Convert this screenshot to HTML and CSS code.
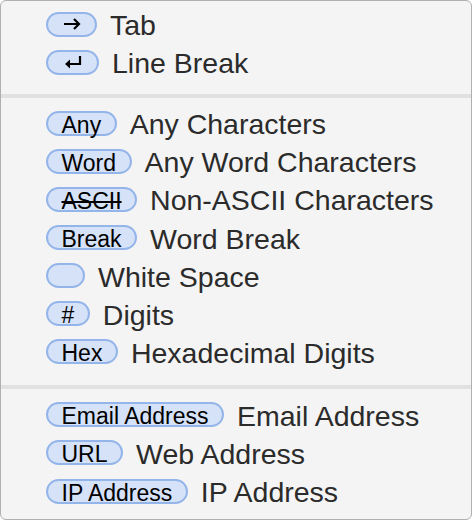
FILE: index.html
```html
<!DOCTYPE html>
<html>
<head>
<meta charset="utf-8">
<link rel="stylesheet" href="styles.css">
</head>
<body>
<div class="menu">
  <div class="section first">
    <div class="row">
      <span class="pill icon tab"><svg width="18" height="14" viewBox="0 0 18 14"><path d="M1 7 H16 M11 2 L16 7 L11 12" fill="none" stroke="#000" stroke-width="2.2"/></svg></span>
      <span class="label">Tab</span>
    </div>
    <div class="row">
      <span class="pill icon lb"><svg width="18" height="14" viewBox="0 0 18 14"><path d="M16 1 V9 H3" fill="none" stroke="#000" stroke-width="2.2"/><path d="M1 9 L6 4.5 V13.5 Z" fill="#000"/></svg></span>
      <span class="label">Line Break</span>
    </div>
  </div>
  <div class="sep"></div>
  <div class="section">
    <div class="row"><span class="pill">Any</span><span class="label">Any Characters</span></div>
    <div class="row"><span class="pill">Word</span><span class="label">Any Word Characters</span></div>
    <div class="row"><span class="pill strike">ASCII</span><span class="label">Non-ASCII Characters</span></div>
    <div class="row"><span class="pill">Break</span><span class="label">Word Break</span></div>
    <div class="row"><span class="pill space"></span><span class="label">White Space</span></div>
    <div class="row"><span class="pill">#</span><span class="label">Digits</span></div>
    <div class="row"><span class="pill">Hex</span><span class="label">Hexadecimal Digits</span></div>
  </div>
  <div class="sep"></div>
  <div class="section last">
    <div class="row"><span class="pill">Email Address</span><span class="label">Email Address</span></div>
    <div class="row"><span class="pill">URL</span><span class="label">Web Address</span></div>
    <div class="row"><span class="pill">IP Address</span><span class="label">IP Address</span></div>
  </div>
</div>
</body>
</html>
```
FILE: styles.css
```css
html, body {
  margin: 0;
  padding: 0;
  background: #ffffff;
}

.menu {
  width: 472px;
  height: 520px;
  box-sizing: border-box;
  border: 1px solid #b0b0b0;
  border-radius: 6px;
  background: #f4f4f4;
  overflow: hidden;
  font-family: "Liberation Sans", Arial, sans-serif;
  display: flex;
  flex-direction: column;
}

.section {
  padding: 6px 0 14px 45px;
  display: flex;
  flex-direction: column;
}

.section.first {
  padding-top: 4px;
  padding-bottom: 13px;
}

.section.last {
  padding-top: 7px;
  padding-bottom: 0;
}

.row {
  height: 38.1px;
  display: flex;
  align-items: center;
  gap: 13px;
}

.sep {
  height: 4px;
  background: #e1e1e1;
}

.pill {
  box-sizing: border-box;
  height: 25px;
  border: 2px solid #94b5ea;
  border-radius: 13px;
  background: #d5e2f7;
  padding: 3px 13.5px 0;
  font-size: 23px;
  line-height: 18px;
  color: #000;
  white-space: nowrap;
}

.pill.icon {
  display: flex;
  align-items: center;
  justify-content: center;
  padding: 0;
}

.pill.tab {
  width: 51px;
}

.pill.lb {
  width: 53px;
}

.pill.space {
  width: 39px;
  padding: 0;
}

.pill.strike {
  text-decoration: line-through;
  text-decoration-thickness: 2px;
}

.label {
  font-size: 28.5px;
  color: #2b2b2b;
  padding-top: 3px;
  white-space: nowrap;
}
```
